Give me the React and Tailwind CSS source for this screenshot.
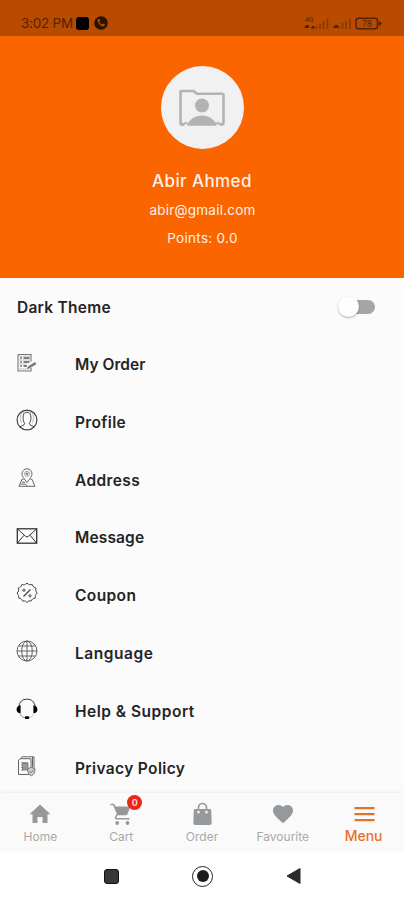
import React, { useState } from 'react';
import { MdFavorite } from 'react-icons/md';

const OrderIcon = () => (
    <svg width="22" height="22" viewBox="0 0 22 22" fill="none" stroke="#777" strokeWidth="0.9">
        <path d="M2 2.500h13v7M2 2.500v16.500h13v-3" strokeWidth="1.100" />
        <path d="M4 6h2M4 10h2M4 14h2" strokeWidth="1.500" />
        <path d="M7.500 6h6M7.500 10h6M7.500 14h3.500" stroke="#555" strokeWidth="1.300" />
        <path d="M3 4.200h11M3 8h11M3 12h8M3 17h10" stroke="#bbb" />
        <path d="M11.500 16.300l1-1.800 6.500-4 1 1.400-6.500 4z" fill="#777" />
    </svg>
);

const ProfileIcon = () => (
    <svg width="22" height="22" viewBox="0 0 22 22" fill="none" stroke="#444" strokeWidth="1">
        <circle cx="11" cy="11" r="9.900" strokeWidth="1.200" />
        <path d="M4 17.800c1.500-1.300 4.500-1.200 4.700-3.300C6.900 12 6.900 9 7.300 6.500 7.700 4 9.200 3.200 11 3.200s3.300.8 3.700 3.300c.4 2.500.4 5.500-1.400 8 .2 2.100 3.200 2 4.700 3.300" />
        <path d="M8 3.500C5.500 3 4.600 5 4.600 7.500s-.2 4.500 1.200 6.500M14 3.500c2.500-.5 3.400 1.500 3.400 4s.2 4.500-1.200 6.500" stroke="#aaa" strokeWidth="0.8" />
    </svg>
);

const AddressIcon = () => (
    <svg width="22" height="22" viewBox="0 0 22 22" fill="none" stroke="#666" strokeWidth="1">
        <path d="M11 15.500C8 11.500 6 9.300 6 6.800a5 5 0 0 1 10 0c0 2.500-2 4.700-5 8.700z" />
        <circle cx="11" cy="6.800" r="2.500" stroke="#aaa" />
        <path d="M11 5.300v3M9.500 6.800h3" strokeWidth="0.9" />
        <path d="M7.500 12.300H6l-3 7h16l-3-7h-1.500" />
        <path d="M4.500 17l5 .2 2 1.800M6 15l3 .5" />
    </svg>
);

const MessageIcon = () => (
    <svg width="22" height="22" viewBox="0 0 22 22" fill="none" stroke="#333" strokeWidth="1">
        <rect x="1.300" y="3.800" width="19.400" height="14.400" strokeWidth="1.300" />
        <path d="M1.500 4l8.300 7.500q1.200 1 2.400 0L20.500 4M1.500 18l6.500-7.700M20.500 18L14 10.300" />
    </svg>
);

const CouponIcon = () => (
    <svg width="22" height="22" viewBox="0 0 22 22" fill="none" stroke="#444" strokeWidth="1">
        <path d="M11 1q1.300 1.700 2.600 1.700t2.700-.2q.6 1.900 1.600 2.600t2.100 1q-.6 2.100-.1 3t1.300 1.900q-1.600 1.500-1.800 2.600t-.1 2.500q-2 .2-2.900 1t-1.400 2.100q-2-.5-2.800-.1T11 20.600q-.8-1.100-1.700-1.500t-2.500.1q-.8-1.700-1.700-2.300t-2.400-.8q.2-1.500-.2-2.500T1 11q1.300-1 1.500-2t-.3-2.900q1.500-.4 2.300-1.100T5.800 2.500q1.700.5 2.700.2T11 1z" />
        <path d="M14.500 7.500l-7 7" strokeWidth="1.200" />
        <circle cx="8" cy="8.200" r="1.100" />
        <circle cx="14" cy="13.800" r="1.100" />
    </svg>
);

const LanguageIcon = () => (
    <svg width="22" height="22" viewBox="0 0 22 22" fill="none" stroke="#555" strokeWidth="0.9">
        <circle cx="11" cy="11" r="10" />
        <ellipse cx="11" cy="11" rx="5.300" ry="10" />
        <path d="M11 1v20M1 11h20M2.600 6h16.800M2.600 16h16.800" />
    </svg>
);

const SupportIcon = () => (
    <svg width="22" height="22" viewBox="0 0 22 22" fill="none" stroke="#333" strokeWidth="1">
        <path d="M3 8.500c.3-4.800 3.500-7.300 8-7.300s7.700 2.500 8 7.300" />
        <path d="M4.600 7.300C2 7.600.6 9.300.6 11.400s1.400 3.600 4 3.900zM17.400 7.300c2.600.3 4 2 4 4.100s-1.400 3.600-4 3.900z" fill="#000" stroke="none" />
        <path d="M4 15.300c.7 2.200 2.200 3.900 4.500 4.400" stroke="#777" strokeWidth="0.8" />
        <path d="M17.800 15.300c-.7 2-1.800 3.300-4 4" stroke="#bbb" strokeWidth="0.8" />
        <rect x="8.700" y="18.300" width="4.600" height="2.700" rx="1.200" fill="#000" stroke="none" />
    </svg>
);

const PolicyIcon = () => (
    <svg width="22" height="22" viewBox="0 0 22 22" fill="none" stroke="#666" strokeWidth="1">
        <path d="M2.500 5l2-1.300H15v9M2.500 5v14.500H13" />
        <path d="M4.500 3.500l1.500-1.700h12V13M16.500 2v10" />
        <path d="M5 7.500h7M5 10h2M5 12.500h2M5 15h2" stroke="#999" />
        <rect x="6.500" y="8.500" width="5.500" height="6.500" fill="#999" strokeWidth="0.7" />
        <path d="M15.300 12.300l3.700 1.500c.1 3.500-1 5.700-3.700 7-2.700-1.300-3.800-3.500-3.700-7z" fill="#ccc" stroke="#777" />
        <path d="M13.500 16.300l1.500 1.500 2.500-2.800" strokeWidth="0.8" />
    </svg>
);

const menuItems = [
    { label: 'My Order', icon: OrderIcon, spacing: 'tracking-[0.02px]' },
    { label: 'Profile', icon: ProfileIcon, spacing: 'tracking-[0.35px]' },
    { label: 'Address', icon: AddressIcon, spacing: 'tracking-[0.4px]' },
    { label: 'Message', icon: MessageIcon, spacing: 'tracking-[0.14px]' },
    { label: 'Coupon', icon: CouponIcon, spacing: 'tracking-[0.4px]' },
    { label: 'Language', icon: LanguageIcon, spacing: 'tracking-[0.55px]' },
    { label: 'Help & Support', icon: SupportIcon, spacing: 'tracking-[0.5px]' },
    { label: 'Privacy Policy', icon: PolicyIcon, spacing: 'tracking-[0.36px]' },
];

const HomeIcon = () => (
    <svg width="24" height="24" viewBox="0 0 24 24" fill="currentColor">
        <path d="M12 2.500l10.500 9.700h-3V21h-5v-6h-5v6h-5v-8.800h-3z" />
    </svg>
);

const CartIcon = () => (
    <svg width="24" height="24" viewBox="0 0 24 24" fill="none" stroke="currentColor" strokeWidth="1.600">
        <path d="M1.500 2.500h3.200l4 9.500-2 3.200c-.5 1 0 1.600 1 1.600H20.500" />
        <path d="M5.500 4.500H21.500l-3 7.500a2 2 0 0 1-1.800 1.200H9z" fill="currentColor" stroke="none" />
        <circle cx="8.200" cy="21" r="1.900" fill="currentColor" stroke="none" />
        <circle cx="18.500" cy="21" r="1.900" fill="currentColor" stroke="none" />
    </svg>
);

const BagIcon = () => (
    <svg width="24" height="24" viewBox="0 0 24 24" fill="none">
        <path d="M4.800 7h15.400a1 1 0 0 1 1 .9L21.700 21a2 2 0 0 1-2 2H5.300a2 2 0 0 1-2-2L3.800 7.900A1 1 0 0 1 4.800 7z" fill="currentColor" />
        <path d="M8.500 9V5.500a4 4 0 0 1 8 0V9" stroke="currentColor" strokeWidth="1.700" />
        <circle cx="8.500" cy="10" r="1.500" fill="#e8e8e8" />
        <circle cx="16.500" cy="10" r="1.500" fill="#e8e8e8" />
    </svg>
);

const MenuIcon = () => (
    <svg width="24" height="24" viewBox="0 0 24 24" stroke="currentColor" strokeWidth="2.300">
        <path d="M2.500 6.200h20M2.500 12.200h20M2.500 18.200h20" />
    </svg>
);

const navItems = [
    { label: 'Home', icon: HomeIcon },
    { label: 'Cart', icon: CartIcon, badge: 0 },
    { label: 'Order', icon: BagIcon },
    { label: 'Favourite', icon: MdFavorite },
    { label: 'Menu', icon: MenuIcon },
];

const StatusBar = () => (
    <div className="h-9 shrink-0 bg-[#b94b00] flex items-center pt-[10px] pl-[21px] pr-[21px] text-[#542400]">
        <span className="w-[52px] whitespace-nowrap pt-px text-[13.500px] leading-none tracking-[-0.25px]">3:02 PM</span>
        <div className="ml-[3px] size-[13px] rounded-[3px] bg-black"></div>
        <svg className="ml-[5px]" width="14" height="14" viewBox="0 0 14 14">
            <circle cx="7" cy="7" r="6.800" fill="#2d1200" />
            <path d="M3.500 3.200l1.700-.4 1 2-1 1c.6 1.300 1.400 2.100 2.700 2.700l1-1 2 1-.4 1.700C6.500 10.700 3.300 7 3.500 3.200z" fill="#b94b00" />
        </svg>
        <svg className="ml-auto" width="80" height="15" viewBox="0 0 80 15">
            <text x="2" y="5.500" fontSize="6" fontWeight="700" fill="#6b2d02">4G</text>
            <path d="M1 12l2-3h3v3zM7.500 12l2-2h2v3zM30 12l2-3h3v3z" fill="#542400" />
            <g stroke="#853803" strokeWidth="1.600">
                <path d="M13.500 13V10M17 13V8M20.500 13V5M24.500 13V2.500M36 13V10M39.500 13V7M43 13V5M47 13V2.500" />
            </g>
            <rect x="53" y="2.300" width="21.500" height="10.400" rx="2.500" fill="none" stroke="#542400" strokeWidth="1.400" />
            <path d="M75.500 4.500l3.500 3-3.500 3z" fill="#542400" />
            <text x="59" y="10.800" fontSize="8.500" fill="#542400">78</text>
        </svg>
    </div>
);

const App = () => {
    const [darkTheme, setDarkTheme] = useState(false);

    return (
        <div className="w-full h-[900px] flex flex-col overflow-hidden bg-[#fbfbfb] font-[Inter,'Noto_Sans',sans-serif]">
            <StatusBar />

            {/* Account header */}
            <div className="h-[242px] shrink-0 bg-[#fb6500] flex flex-col items-center pt-[30px] text-[#fff1e6] leading-none">
                <div className="size-[83px] rounded-full bg-[#f1f1f1] flex items-center justify-center">
                    <svg width="48" height="38" viewBox="0 0 48 38" fill="none">
                        <path d="M5 35.500H3.500a1 1 0 0 1-1-1V3a1 1 0 0 1 1-1H15.500L19 4.800h25.200a1.300 1.300 0 0 1 1.300 1.300V34a1.500 1.500 0 0 1-1.300 1.500H43" stroke="#b3b3b3" strokeWidth="2.600" />
                        <circle cx="24" cy="16.500" r="7" fill="#b3b3b3" />
                        <path d="M3 33.500l3 .5 1.500-1.500 2.500 1.500c3-4.500 8-7.500 14-7.500s11 3 14 7.500l2-1.500 2 1.500 3-.5v3h-3.500L40 34.500l-2 2.300H10L8 34.500l-2 2.300H3z" fill="#b3b3b3" />
                    </svg>
                </div>
                <p className="mt-[24px] text-[17px] font-medium tracking-[0.4px]">Abir Ahmed</p>
                <p className="mt-[14px] pl-px text-[13.500px] tracking-[0.23px]">abir@gmail.com</p>
                <p className="mt-[14px] pl-px text-[13.500px] tracking-[0.3px]">Points: 0.0</p>
            </div>

            {/* Settings list */}
            <div className="flex-1 min-h-0 overflow-hidden text-[15.500px] font-semibold text-[#242424]">
                <div className="h-[57.700px] flex items-center justify-between pl-[17px] pr-[28px]">
                    <span className="pt-px tracking-[0.26px]">Dark Theme</span>
                    <button
                        type="button"
                        aria-label="Dark Theme"
                        onClick={() => setDarkTheme(!darkTheme)}
                        className={`w-[38px] h-[23px] flex items-center relative ${darkTheme ? 'justify-end' : 'justify-start'}`}
                    >
                        <span className="absolute inset-x-[1px] h-[14px] rounded-full bg-[#a5a5a5]"></span>
                        <span className="relative size-[21px] rounded-full bg-[#fdfdfd] shadow-[0_1px_2px_rgba(0,0,0,0.3)]"></span>
                    </button>
                </div>
                {menuItems.map(({ label, icon: Icon, spacing }) => (
                    <div key={label} className="h-[57.700px] flex items-center pl-4">
                        <div className="w-[59px] shrink-0 pb-[4px]">
                            <Icon />
                        </div>
                        <span className={`pt-px ${spacing}`}>{label}</span>
                    </div>
                ))}
            </div>

            {/* Bottom navigation */}
            <div className="h-[59px] shrink-0 grid grid-cols-5 bg-[#fafafa] shadow-[0_-1px_3px_rgba(0,0,0,0.06)] relative">
                {navItems.map(({ label, icon: Icon, badge }) => (
                    <div
                        key={label}
                        className={`flex flex-col items-center pt-[9px] ${label === 'Menu' ? 'text-[#e4712a]' : 'text-[#96999b]'}`}
                    >
                        <div className="relative">
                            <Icon size={24} />
                            {badge !== undefined && (
                                <span className="absolute left-[18px] -top-[7px] size-[15px] rounded-full bg-[#ef2418] text-[#ffd9d4] text-[9px] font-bold flex items-center justify-center">
                                    {badge}
                                </span>
                            )}
                        </div>
                        <span className={label === 'Menu' ? 'mt-[1px] text-[14px] leading-[18px] font-medium' : 'mt-[2px] text-[12px] leading-[18px] text-[#a9a9a9]'}>
                            {label}
                        </span>
                    </div>
                ))}
            </div>

            {/* System navigation */}
            <div className="h-12 shrink-0 bg-white flex items-center justify-center">
                <div className="flex items-center w-[198px] justify-between">
                    <div className="ml-[1px] size-[15px] rounded-[3px] bg-[#373737] border border-[#111]"></div>
                    <div className="size-[21px] rounded-full border-[1.500px] border-[#222] flex items-center justify-center">
                        <div className="size-[12px] rounded-full bg-[#1c1c1c]"></div>
                    </div>
                    <svg width="15" height="18" viewBox="0 0 15 18">
                        <path d="M14 1.500v15L1 9z" fill="#2b2b2b" stroke="#2b2b2b" strokeLinejoin="round" />
                    </svg>
                </div>
            </div>
        </div>
    );
};

export default App;
